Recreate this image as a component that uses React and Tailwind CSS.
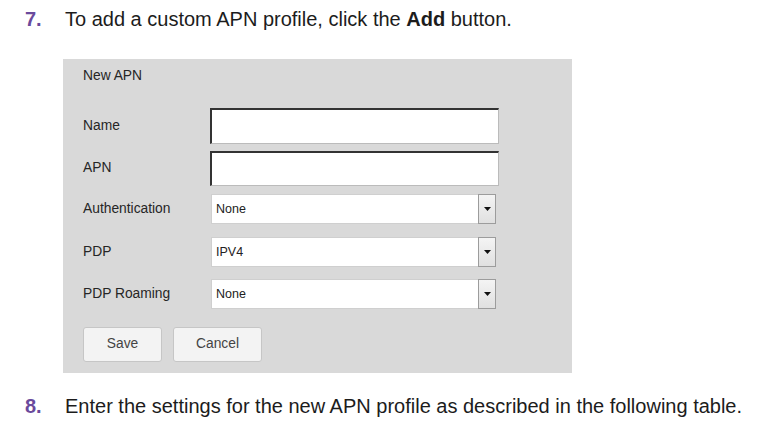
export default function App() {
  return (
    <div className="w-[768px] h-[442px] bg-white overflow-hidden font-['Liberation_Sans',Arial,sans-serif] text-[#1c1c1c]">
      <div className="flex pt-[8px] pl-[25px] text-[20px] leading-[23px]">
        <span className="w-[40px] font-bold text-[#6a4a9c]">7.</span>
        <span>
          To add a custom APN profile, click the <b>Add</b> button.
        </span>
      </div>

      <div className="ml-[63px] mt-[28px] w-[509px] h-[314px] bg-[#d9d9d9] pl-[20px] text-[13.8px] text-[#262626] pt-[9px]">
        <div className="h-4 leading-4">New APN</div>

        <div className="mt-[24px] h-[36px] flex items-center">
          <span className="w-[127px]">Name</span>
          <div className="w-[289px] h-full bg-white border-t-2 border-l-2 border-r border-b border-t-[#333] border-l-[#333] border-r-[#bbb] border-b-[#bbb]" />
        </div>

        <div className="mt-[7px] h-[35px] flex items-center">
          <span className="w-[127px]">APN</span>
          <div className="w-[289px] h-full bg-white border-t-2 border-l-2 border-r border-b border-t-[#333] border-l-[#333] border-r-[#bbb] border-b-[#bbb]" />
        </div>

        <SelectRow label="Authentication" value="None" top="mt-[8px]" />
        <SelectRow label="PDP" value="IPV4" top="mt-[13px]" />
        <SelectRow label="PDP Roaming" value="None" top="mt-[12px]" />

        <div className="mt-[18px] h-[35px] flex gap-[11px]">
          <button className="w-[79px] h-full bg-[#f3f3f3] border border-[#c6c6c6] rounded-[3px] text-[#444]">Save</button>
          <button className="w-[89px] h-full bg-[#f3f3f3] border border-[#c6c6c6] rounded-[3px] text-[#444]">Cancel</button>
        </div>
      </div>

      <div className="flex mt-[22px] pl-[25px] text-[20px] leading-[23px]">
        <span className="w-[40px] font-bold text-[#6a4a9c]">8.</span>
        <span>Enter the settings for the new APN profile as described in the following table.</span>
      </div>
    </div>
  );
}

function SelectRow({ label, value, top }) {
  return (
    <div className={`${top} h-[30px] flex items-center`}>
      <span className="w-[128px]">{label}</span>
      <div className="w-[285px] h-full bg-white border border-[#cfcfcf] flex items-center justify-between">
        <span className="pl-[4px] text-[12.5px] text-[#222]">{value}</span>
        <div className="w-[18px] h-[30px] -mr-px bg-gradient-to-b from-[#f4f4f4] to-[#e0e0e0] border border-[#9c9c9c] flex items-center justify-center">
          <svg width="7" height="4" viewBox="0 0 7 4">
            <path d="M0 0h7L3.5 4z" fill="#111" />
          </svg>
        </div>
      </div>
    </div>
  );
}
